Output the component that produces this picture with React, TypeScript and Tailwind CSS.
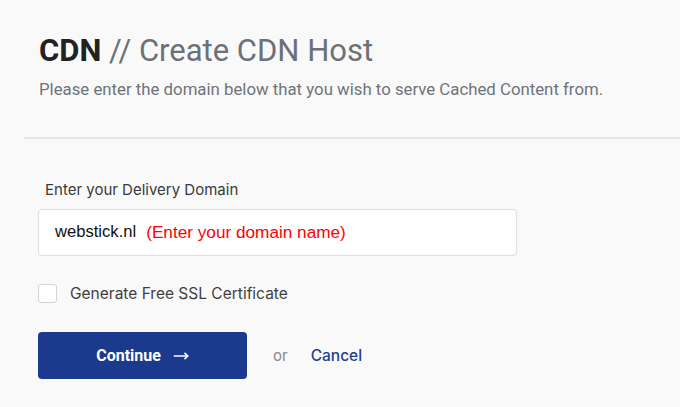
import { MoveRight } from "lucide-react";

export default function App() {
  return (
    <div className="min-h-[407px] w-[680px] overflow-hidden bg-[#f9f9f9] font-['Roboto',sans-serif]">
      <div className="px-[39px] pt-[32px] pb-[38px]">
        <h1 className="text-[31px] leading-[38px] text-[#6b7079]">
          <span className="font-bold text-[#222]">CDN</span> // Create CDN Host
        </h1>
        <p className="mt-[9px] text-[16.8px] leading-[20px] text-[#6f737a]">
          Please enter the domain below that you wish to serve Cached Content from.
        </p>
      </div>
      <div className="ml-[24px] h-[2px] bg-[#e6e6e6]" />

      <div className="px-[38px] pt-[41px]">
        <label className="block pl-[7px] font-['Inter',sans-serif] text-[15px] leading-[20px] text-[#3a3a3a]">
          Enter your Delivery Domain
        </label>
        <div className="mt-[9px] flex h-[47px] w-[479px] items-center rounded-[4px] border border-[#dedede] bg-white pl-[16px] font-['Liberation_Sans',Arial,sans-serif] text-[16.6px]">
          <span className="text-[#111]">webstick.nl</span>
          <span className="ml-[10px] text-[17.2px] text-[#ff0000]">(Enter your domain name)</span>
        </div>

        <div className="mt-[26px] flex items-center gap-[13px]">
          <span className="h-[19px] w-[19px] rounded-[3px] border border-[#d4d4d4] bg-white" />
          <span className="font-['Inter',sans-serif] text-[15.5px] text-[#3f3f3f]">Generate Free SSL Certificate</span>
        </div>

        <div className="mt-[27px] flex items-center">
          <button className="flex h-[47px] w-[209px] items-center justify-center gap-[12px] rounded-[4px] bg-[#1b3a8e] text-[16px] font-bold text-white">
            Continue
            <MoveRight className="h-[16px] w-[16px]" strokeWidth={2.5} />
          </button>
          <span className="ml-[26px] font-['Inter',sans-serif] text-[15px] text-[#888]">or</span>
          <span className="ml-[23px] font-['Inter',sans-serif] text-[15.5px] font-medium text-[#23408f]">Cancel</span>
        </div>
      </div>
    </div>
  );
}
